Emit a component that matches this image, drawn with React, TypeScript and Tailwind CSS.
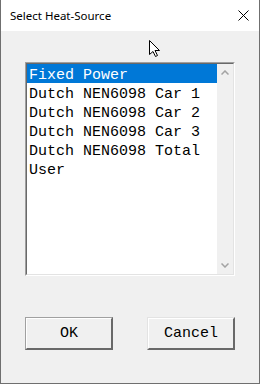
import React from "react";

const items = [
  "Fixed Power",
  "Dutch NEN6098 Car 1",
  "Dutch NEN6098 Car 2",
  "Dutch NEN6098 Car 3",
  "Dutch NEN6098 Total",
  "User",
];

const mono = "font-['Liberation_Mono',monospace] text-[15px]";

const ClassicButton = ({ label, isDefault }: { label: string; isDefault?: boolean }) => (
  <div
    className={`h-[33px] w-[88px] border ${
      isDefault
        ? "border-t-[#a0a0a0] border-l-[#a0a0a0]"
        : "border-t-[#e3e3e3] border-l-[#e3e3e3]"
    } border-r-[#696969] border-b-[#696969]`}
  >
    <div className="flex h-full w-full items-center justify-center border border-t-white border-l-white border-r-[#696969] border-b-[#696969] bg-[#f0f0f0]">
      <span className={`${mono} leading-[16px] text-black`}>{label}</span>
    </div>
  </div>
);

const App = () => {
  return (
    <div className="relative flex h-[384px] w-[260px] flex-col border-x border-b border-[#6f6f6f] bg-[#f0f0f0]">
      {/* title bar */}
      <div className="flex h-[31px] items-center justify-between bg-white pl-[9px] pr-[9px]">
        <span className="font-['Noto_Sans',sans-serif] text-[11.5px] text-black">
          Select Heat-Source
        </span>
        <svg width="11" height="11" viewBox="0 0 11 11" className="mr-[1px]">
          <path d="M0.5 0.5 L10.5 10.5 M10.5 0.5 L0.5 10.5" stroke="#000" strokeWidth="1" />
        </svg>
      </div>

      <div className="flex flex-1 flex-col px-[24px] pt-[31px]">
        {/* list box */}
        <div className="h-[214px] w-[210px] border border-t-[#a0a0a0] border-l-[#a0a0a0] border-r-white border-b-white">
          <div className="flex h-full w-full border border-t-[#696969] border-l-[#696969] border-r-[#e3e3e3] border-b-[#e3e3e3]">
            <div className="flex-1 bg-white">
              {items.map((item, i) => (
                <div
                  key={item}
                  className={`h-[19px] whitespace-pre pl-[2px] pt-[4px] ${mono} leading-[16px] ${
                    i === 0 ? "bg-[#0078d7] text-white" : "text-black"
                  }`}
                >
                  {item}
                </div>
              ))}
            </div>
            <div className="flex w-[16px] flex-col justify-between bg-[#f0f0f0]">
              <div className="flex h-[17px] items-center justify-center">
                <svg width="8" height="5" viewBox="0 0 8 5">
                  <path d="M0.5 4.5 L4 1 L7.5 4.5" fill="none" stroke="#a3a3a3" strokeWidth="1.5" />
                </svg>
              </div>
              <div className="flex h-[17px] items-center justify-center">
                <svg width="8" height="5" viewBox="0 0 8 5">
                  <path d="M0.5 0.5 L4 4 L7.5 0.5" fill="none" stroke="#a3a3a3" strokeWidth="1.5" />
                </svg>
              </div>
            </div>
          </div>
        </div>

        {/* buttons */}
        <div className="mt-[41px] flex w-[210px] justify-between">
          <ClassicButton label="OK" isDefault />
          <ClassicButton label="Cancel" />
        </div>
      </div>

      {/* mouse pointer */}
      <svg
        width="13"
        height="19"
        viewBox="0 0 13 19"
        className="absolute left-[147px] top-[39px]"
      >
        <path
          d="M1.5 1.5 V15.5 L5 12.5 L7.5 17.5 L9.5 16.5 L7 11.5 H11.5 Z"
          fill="#fff"
          stroke="#000"
          strokeWidth="1"
          strokeLinejoin="miter"
        />
      </svg>
    </div>
  );
};

export default App;
